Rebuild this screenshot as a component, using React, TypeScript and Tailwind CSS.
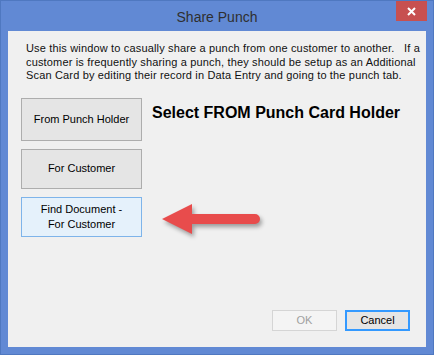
import React from 'react'

function Arrow() {
  return (
    <svg
      width="104"
      height="40"
      viewBox="0 0 104 40"
      className="absolute left-[152px] top-[170px] [filter:drop-shadow(2px_3px_2px_rgba(0,0,0,0.35))]"
    >
      <path d="M2 18 L32 3 L32 13 L95 13 A5 5 0 0 1 95 23 L32 23 L32 33 Z" fill="#e84c4c" />
    </svg>
  )
}

export default function App() {
  const btn =
    'w-[121px] border border-[#adadad] bg-[#e5e5e5] text-[11px] leading-[15px] text-black flex items-center justify-center text-center'
  return (
    <div className="w-[434px] h-[355px] bg-[#6189d4] border border-[#4f78c0] flex flex-col font-['Liberation_Sans',Arial,sans-serif]">
      <div className="relative h-[30px] shrink-0 flex items-center justify-center">
        <span className="text-[14px] text-[#2f2f2f] pt-[2px]">Share Punch</span>
        <div className="absolute right-[6px] top-0 w-[31px] h-[20px] bg-[#c75050] flex items-center justify-center">
          <svg width="9" height="9" viewBox="0 0 9 9">
            <path d="M1 1 L8 8 M8 1 L1 8" stroke="#fff" strokeWidth="2" />
          </svg>
        </div>
      </div>
      <div className="relative flex-1 mx-[7px] mb-[7px] bg-[#f0f0f0] flex flex-col">
        <p className="pl-[18px] pr-[4px] pt-[11px] text-[11px] leading-[13.5px] tracking-[0.16px] text-[#111]">
          Use this window to casually share a punch from one customer to another.&nbsp;&nbsp; If a
          <br />
          customer is frequently sharing a punch, they should be setup as an Additional
          <br />
          Scan Card by editing their record in Data Entry and going to the punch tab.
        </p>
        <div className="flex mt-[15px] ml-[13px]">
          <div className="flex flex-col gap-[8px]">
            <div className={`${btn} h-[43px]`}>From Punch Holder</div>
            <div className={`${btn} h-[40px]`}>For Customer</div>
            <div className="w-[121px] h-[40px] border border-[#7eb4ea] bg-[#e5f1fb] text-[11px] leading-[15px] text-black flex items-center justify-center text-center">
              Find Document -<br />For Customer
            </div>
          </div>
          <div className="ml-[10px] mt-[6px] text-[16px] leading-[18px] font-bold text-black">
            Select FROM Punch Card Holder
          </div>
        </div>
        <Arrow />
        <div className="mt-auto mb-[16px] mr-[16px] flex justify-end gap-[8px]">
          <div className="w-[65px] h-[21px] border border-[#d5d5d5] bg-[#f4f4f4] text-[11px] text-[#a0a0a0] flex items-center justify-center">
            OK
          </div>
          <div className="w-[65px] h-[21px] border-2 border-[#3399ff] bg-[#e5e5e5] text-[11px] text-black flex items-center justify-center">
            Cancel
          </div>
        </div>
      </div>
    </div>
  )
}
